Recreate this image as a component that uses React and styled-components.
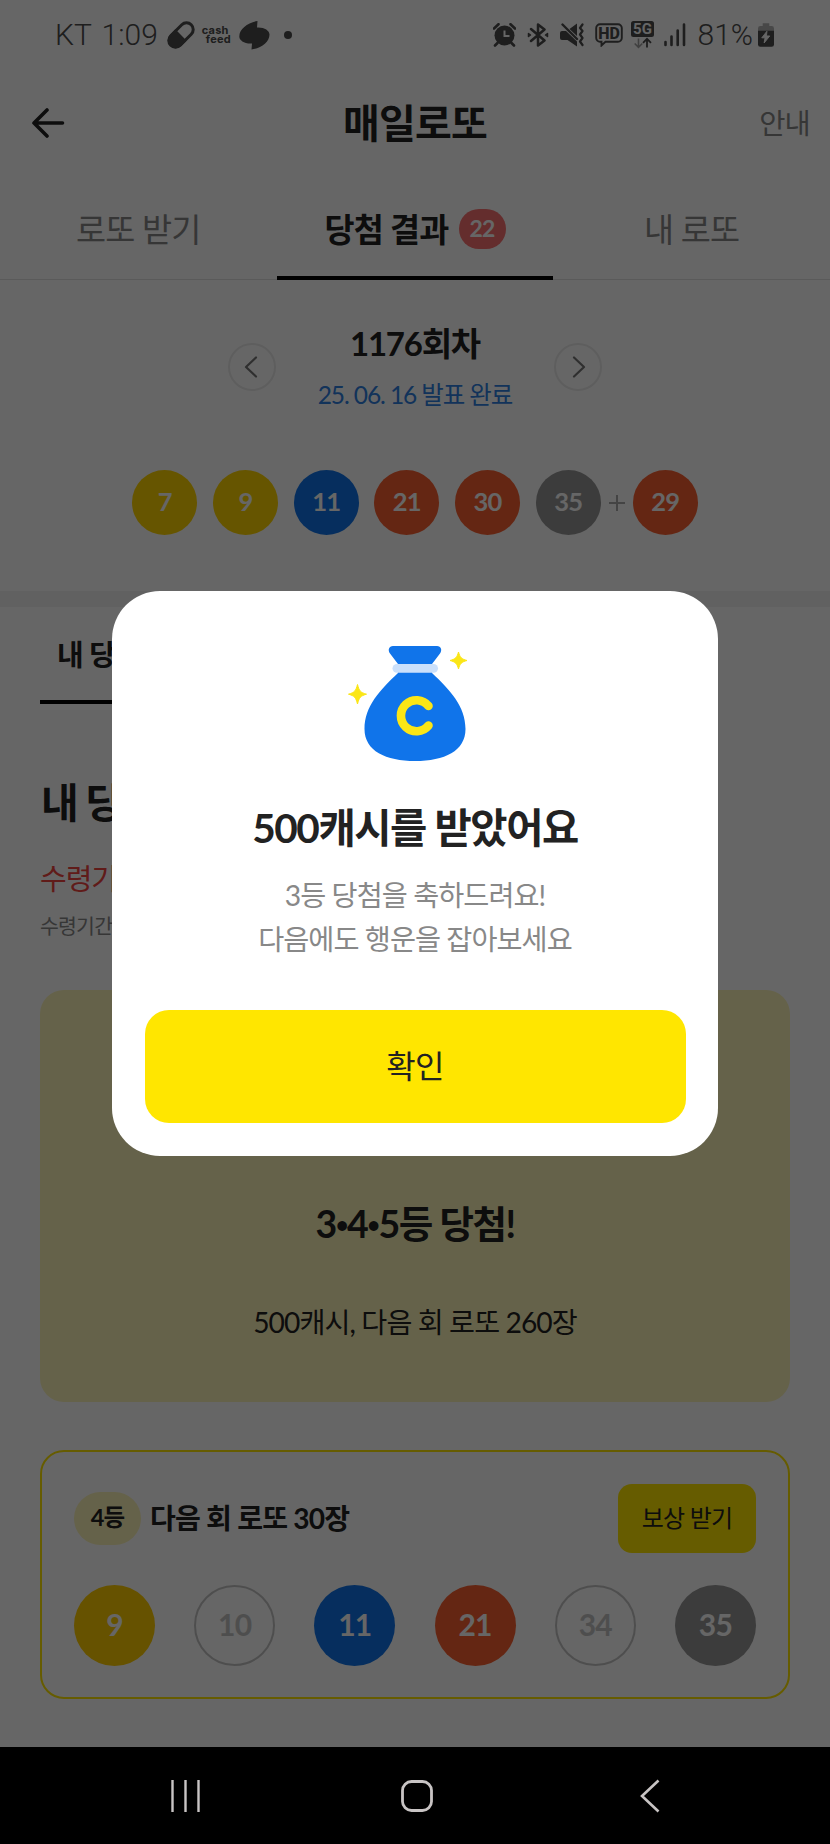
import React from 'react';
import styled, { createGlobalStyle } from 'styled-components';

const GlobalStyle = createGlobalStyle`
  * {
    box-sizing: border-box;
  }

  body {
    margin: 0;
    background: #000;
    font-family: Lato, 'Noto Sans CJK KR', sans-serif;
    letter-spacing: -0.8px;
    color: #222;
  }

  svg {
    display: block;
    flex: none;
  }

  button {
    border: 0;
    padding: 0;
    background: none;
    font: inherit;
    letter-spacing: inherit;
    color: inherit;
  }
`;

const Screen = styled.div`
  width: 830px;
  height: 1844px;
  display: flex;
  flex-direction: column;
  overflow: hidden;
`;

const Page = styled.div`
  position: relative;
  height: 1747px;
  background: #fff;
  display: flex;
  flex-direction: column;
`;

const StatusBar = styled.div`
  height: 70px;
  padding: 0 56px 0 54px;
  display: flex;
  justify-content: space-between;
  align-items: center;
  color: #4b4b4b;
`;

const StatusGroup = styled.div`
  display: flex;
  align-items: center;
  gap: ${props => props.$gap}px;
`;

const StatusText = styled.span`
  font-family: Roboto, sans-serif;
  font-weight: 300;
  font-size: 30px;
  line-height: 34px;
  letter-spacing: 0;
  word-spacing: 3px;
  margin-left: 1px;
  white-space: pre;
`;

const CashFeed = styled.span`
  width: 29px;
  font-family: Inter, sans-serif;
  font-weight: 700;
  font-size: 11px;
  line-height: 9px;
  letter-spacing: 0.2px;

  span {
    display: block;
    padding-left: 4px;
  }
`;

const Header = styled.header`
  height: 106px;
  padding: 0 20px;
  display: grid;
  grid-template-columns: 1fr auto 1fr;
  align-items: center;
`;

const HeaderTitle = styled.h1`
  margin: 0;
  padding-bottom: 1px;
  font-size: 40px;
  line-height: 56px;
  font-weight: 700;
`;

const HeaderLink = styled.span`
  justify-self: end;
  padding-bottom: 4px;
  font-size: 28.5px;
  color: #888;
`;

const Tabs = styled.nav`
  height: 104px;
  display: grid;
  grid-template-columns: repeat(3, 1fr);
  border-bottom: 1px solid #e2e2e2;
`;

const Tab = styled.div`
  height: 104px;
  padding-top: 2px;
  display: flex;
  align-items: center;
  justify-content: center;
  gap: 10px;
  font-size: 32.7px;
  font-weight: ${props => (props.$active ? 700 : 400)};
  color: ${props => (props.$active ? '#222' : '#888')};
  border-bottom: ${props => (props.$active ? '4px solid #000' : '4px solid transparent')};
`;

const Badge = styled.span`
  width: 47px;
  height: 40px;
  margin-top: 3px;
  border-radius: 20px;
  background: #fa7070;
  color: #fff;
  font-size: 23px;
  line-height: 39px;
  text-align: center;
`;

const Round = styled.section`
  height: 311px;
  padding-top: 42px;
`;

const RoundPicker = styled.div`
  height: 90px;
  display: flex;
  align-items: center;
  justify-content: center;
  gap: 41px;
`;

const ArrowButton = styled.button`
  width: 48px;
  height: 48px;
  padding-right: ${props => (props.$right ? 0 : 3)}px;
  padding-left: ${props => (props.$right ? 2 : 0)}px;
  border: 2px solid #ebebeb;
  border-radius: 50%;
  display: flex;
  align-items: center;
  justify-content: center;
`;

const RoundInfo = styled.div`
  width: 196px;
  white-space: nowrap;
  display: flex;
  flex-direction: column;
  align-items: center;
`;

const RoundTitle = styled.h2`
  margin: 0;
  font-size: 33px;
  line-height: 48px;
  letter-spacing: -1.2px;
`;

const RoundDate = styled.div`
  margin-top: 8px;
  font-size: 24.5px;
  line-height: 40px;
  letter-spacing: -1.1px;
  color: #2f80e2;
`;

const BallLine = styled.div`
  margin-top: 58px;
  display: flex;
  justify-content: center;
  align-items: center;
  gap: 15.7px;
`;

const BonusGroup = styled.div`
  display: flex;
  align-items: center;
  gap: 8px;
`;

const BALL_COLORS = {
  yellow: '#ffd400',
  amber: '#ffcc00',
  blue: '#1074ea',
  red: '#fb6030',
  gray: '#969696',
};

const Ball = styled.div`
  width: ${props => props.$size}px;
  height: ${props => props.$size}px;
  padding-bottom: 3px;
  border-radius: 50%;
  display: flex;
  align-items: center;
  justify-content: center;
  font-size: ${props => (props.$size > 70 ? 30 : 25.5)}px;
  font-weight: 700;
  color: ${props => (props.$color ? '#fff' : '#c4c4c4')};
  background: ${props => (props.$color ? BALL_COLORS[props.$color] : 'transparent')};
  border: ${props => (props.$color ? '0' : '2px solid #c4c4c4')};
`;

const Divider = styled.div`
  height: 16px;
  background: #f3f3f3;
`;

const Content = styled.main`
  padding: 0 40px;
  display: flex;
  flex-direction: column;
`;

const SubTab = styled.div`
  width: 200px;
  height: 97px;
  padding: 26px 17px 0;
  font-size: 29px;
  line-height: 44px;
  font-weight: 700;
  border-bottom: 4px solid #000;
`;

const Heading = styled.h3`
  margin: 69px 0 0 1px;
  font-size: 41px;
  line-height: 60px;
  letter-spacing: -1.5px;
`;

const Period = styled.div`
  margin-top: 24px;
  width: 240px;
  font-size: 29px;
  line-height: 44px;
  letter-spacing: -1px;
  color: #f04440;
`;

const PeriodNote = styled.div`
  margin-top: 10px;
  width: 240px;
  font-size: 20.5px;
  line-height: 30px;
  color: #888;
`;

const PrizeCard = styled.section`
  height: 412px;
  margin-top: 49px;
  padding-bottom: 58px;
  border-radius: 24px;
  background: #fdf5b9;
  display: flex;
  flex-direction: column;
  align-items: center;
  justify-content: flex-end;
`;

const PrizeTitle = styled.div`
  font-size: 37.5px;
  line-height: 56px;
  letter-spacing: -1.5px;
  font-weight: 700;
`;

const Bullet = styled.span`
  font-size: 22px;
  line-height: 1;
  vertical-align: 5px;
`;

const PrizeText = styled.div`
  margin-top: 48px;
  font-size: 28.2px;
  line-height: 44px;
  letter-spacing: -0.9px;
`;

const TicketCard = styled.section`
  height: 249px;
  margin-top: 48px;
  padding: 32px 32px 0;
  border: 2px solid #ffe600;
  border-radius: 24px;
`;

const TicketHead = styled.div`
  height: 69px;
  display: flex;
  align-items: center;
`;

const Rank = styled.span`
  width: 67px;
  height: 53px;
  border-radius: 27px;
  background: #fdf5b9;
  font-size: 23.5px;
  line-height: 51px;
  font-weight: 700;
  text-align: center;
`;

const TicketTitle = styled.span`
  margin-left: 9px;
  padding-bottom: 2px;
  flex: 1;
  font-size: 28.1px;
  line-height: 44px;
  font-weight: 700;
`;

const RewardButton = styled.button`
  width: 138px;
  height: 69px;
  padding-bottom: 4px;
  border-radius: 14px;
  background: #ffe600;
  font-size: 24px;
`;

const TicketBalls = styled.div`
  margin-top: 32px;
  display: flex;
  justify-content: space-between;
`;

const Overlay = styled.div`
  position: absolute;
  inset: 0;
  padding: 591px 0 0 112px;
  background: rgba(0, 0, 0, 0.6);
`;

const Dialog = styled.div`
  width: 606px;
  height: 565px;
  padding: 29px 33px 33px;
  border-radius: 48px;
  background: #fff;
  display: flex;
  flex-direction: column;
  align-items: center;
`;

const BagBox = styled.div`
  padding-right: 10px;
`;

const DialogTitle = styled.h2`
  margin: 28px 0 0;
  font-size: 40.5px;
  line-height: 60px;
  letter-spacing: -1.4px;
`;

const DialogText = styled.p`
  margin: 15px 0 0;
  font-size: 28.3px;
  line-height: 44px;
  letter-spacing: -0.95px;
  text-align: center;
  color: #888;
`;

const ConfirmButton = styled.button`
  width: 541px;
  height: 113px;
  margin-top: auto;
  padding-bottom: 5px;
  border-radius: 24px;
  background: #ffe600;
  font-size: 32px;
`;

const SystemNav = styled.div`
  height: 97px;
  padding: 1px 170px 0;
  background: #000;
  display: flex;
  align-items: center;
  justify-content: space-between;
`;

const HomeButton = styled.button`
  padding-right: 9px;
`;

const PillBox = styled.div`
  margin: 0 -1px 0 1px;
`;

const HdBox = styled.div`
  margin-right: -2px;
`;

const PillIcon = () => (
  <svg width="28" height="28" viewBox="0 0 28 28">
    <g transform="rotate(45 14 14)">
      <rect x="7.3" y="-0.5" width="13.4" height="29" rx="6.7" fill="none" stroke="currentColor" strokeWidth="3" />
      <path d="M6 14h16v7.500a8 8 0 0 1-16 0z" fill="currentColor" />
    </g>
  </svg>
);

const BlobIcon = () => (
  <svg width="31" height="29" viewBox="0 0 31 29">
    <path d="M18.500 0 18 6.500C25 6 30.500 9.500 30.500 13.500 30.500 21 22 27.500 12.500 28.500L13 22.500C5.500 23 .3 19.500.3 15.500.3 8 9 1.500 18.500 0z" fill="currentColor" />
  </svg>
);

const DotIcon = () => (
  <svg width="8" height="8" viewBox="0 0 8 8">
    <circle cx="4" cy="4" r="4" fill="currentColor" />
  </svg>
);

const AlarmIcon = () => (
  <svg width="23" height="24" viewBox="0 0 23 24">
    <circle cx="11.500" cy="12.500" r="10" fill="currentColor" />
    <path d="M1 5.500 5.500 1.200M22 5.500 17.500 1.200M4.500 20 2 22.500M18.500 20l2.500 2.500" stroke="currentColor" strokeWidth="2.600" strokeLinecap="round" />
    <path d="M11.500 7.500v5.500h5" stroke="#fff" strokeWidth="2" fill="none" />
  </svg>
);

const BluetoothIcon = () => (
  <svg width="24" height="24" viewBox="-1 0 24 24" fill="none" stroke="currentColor" strokeWidth="2.500" strokeLinecap="round" strokeLinejoin="round">
    <path d="m4 6 13.500 11.500-6.500 5v-21l6.500 5L4 18" />
    <path d="M1.500 10.500 3.500 12l-2 1.500zM20.500 10.500 18.500 12l2 1.500z" strokeWidth="1.500" fill="currentColor" />
  </svg>
);

const MuteIcon = () => (
  <svg width="24" height="24" viewBox="0 0 24 24" fill="none" stroke="currentColor" strokeWidth="2.200" strokeLinecap="round" strokeLinejoin="round">
    <path d="M2 8h4L17 18.500v5L7.500 17H2a2 2 0 0 1-2-2v-5a2 2 0 0 1 2-2zM9.500 6 17 .5V13z" fill="currentColor" stroke="none" />
    <path d="M2.500 1.500 17 16" strokeWidth="2.400" />
    <path d="m22.500 1.500-2.500 3.500 2.500 3-2.500 3.500 2.500 3.500-2.500 3.500 2.500 3.500" />
  </svg>
);

const HdIcon = () => (
  <svg width="28" height="24" viewBox="0 0 28 24">
    <path d="M5 1.200h18A3.800 3.800 0 0 1 26.800 5v10a3.800 3.800 0 0 1-3.800 3.800H10.500L6.500 22.500v-3.700H5A3.800 3.800 0 0 1 1.200 15V5A3.800 3.800 0 0 1 5 1.200z" fill="none" stroke="currentColor" strokeWidth="1.900" />
    <text x="14" y="15.800" textAnchor="middle" fontFamily="Roboto, sans-serif" fontWeight="800" fontSize="16" letterSpacing="0" fill="currentColor">HD</text>
  </svg>
);

const FiveGIcon = () => (
  <svg width="23" height="28" viewBox="0 0 23 28">
    <rect width="23" height="16" rx="2.500" fill="currentColor" />
    <text x="11.500" y="13.300" textAnchor="middle" fontFamily="Roboto, sans-serif" fontWeight="700" fontSize="15" letterSpacing="0" fill="#fff">5G</text>
    <path d="M7.500 17.500v8.500M3.700 22.500l3.800 3.800 3.800-3.800" fill="none" stroke="#a0a0a0" strokeWidth="1.600" />
    <path d="M16 26.500V18M12 21.800 16 17.800l4 4" fill="none" stroke="currentColor" strokeWidth="1.800" />
  </svg>
);

const SignalIcon = () => (
  <svg width="22" height="24" viewBox="0 0 22 24" stroke="currentColor" strokeWidth="2.600" strokeLinecap="round">
    <path d="M1.500 19v3M7.500 13.500V22M13.700 7.500V22M20 1.500V22" />
  </svg>
);

const BatteryIcon = () => (
  <svg width="16" height="24" viewBox="0 0 17 25">
    <path d="M5 0h7v3h2.500A2.500 2.500 0 0 1 17 5.500V9H0V5.500A2.500 2.500 0 0 1 2.500 3H5z" fill="#b4b4b4" />
    <path d="M0 8h17v14.500a2.500 2.500 0 0 1-2.500 2.500h-12A2.500 2.500 0 0 1 0 22.500z" fill="currentColor" />
    <path d="M9.500 8.500 4 15.500h3.500L6.500 21l6-7.500H9z" fill="#fff" stroke="#fff" />
  </svg>
);

const BackIcon = () => (
  <svg width="45" height="30" viewBox="-11 0 45 30" fill="none" stroke="#222" strokeWidth="3.600" strokeLinecap="round" strokeLinejoin="round">
    <path d="M16 2 3 15l13 13M3 15h28.500" />
  </svg>
);

const Chevron = ({ right }) => (
  <svg width="14" height="22" viewBox="0 0 14 22" fill="none" stroke="#777" strokeWidth="2.200" strokeLinecap="round" strokeLinejoin="round">
    <path d={right ? 'M2 1.500 12 11 2 20.500' : 'M12 1.500 2 11l10 9.500'} />
  </svg>
);

const PlusIcon = () => (
  <svg width="16" height="16" viewBox="0 0 16 16" stroke="#aaa" strokeWidth="2">
    <path d="M0 8h16M8 0v16" />
  </svg>
);

const MoneyBag = () => (
  <svg width="160" height="150" viewBox="0 0 160 150">
    <path d="M63 26h44c4 0 5.500 4 3 7.500L102 44v9c18 17 33.500 33 33.500 56 0 22-21 32-50.300 32S34.500 131 34.500 109c0-23 15.500-39 33.500-56v-9l-8-10.500C57.500 30 59 26 63 26z" fill="#1074ea" />
    <rect x="62.500" y="44" width="45.500" height="8.700" rx="4.350" fill="#cbe0fb" />
    <path d="M98.500 86a15.500 15.500 0 1 0 0 19.500" fill="none" stroke="#fbe616" strokeWidth="8.600" strokeLinecap="round" />
    <path d="M128.500 32c1.500 5.500 3 7 8.500 8.500-5.500 1.500-7 3-8.500 8.500-1.500-5.500-3-7-8.500-8.500 5.500-1.500 7-3 8.500-8.500z" fill="#fbe616" stroke="#fbe616" />
    <path d="M27.500 64.500c1.700 6.500 3 8 9 9.700-6 1.700-7.300 3.200-9 9.800-1.700-6.600-3-8.100-9-9.800 6-1.700 7.300-3.200 9-9.700z" fill="#fbe616" stroke="#fbe616" />
  </svg>
);

const RecentsIcon = () => (
  <svg width="32" height="34" viewBox="0 0 32 34" stroke="#c8c4c4" strokeWidth="2.400">
    <path d="M2.500 1v32M15.500 1v32M28.500 1v32" />
  </svg>
);

const HomeIcon = () => (
  <svg width="34" height="34" viewBox="0 0 34 34">
    <rect x="2.500" y="2.500" width="29" height="29" rx="9" fill="none" stroke="#c8c4c4" strokeWidth="2.800" />
  </svg>
);

const NavBackIcon = () => (
  <svg width="20" height="34" viewBox="0 0 20 34" fill="none" stroke="#c8c4c4" strokeWidth="2.600">
    <path d="M18.500 1.500 2 17l16.500 15.500" />
  </svg>
);

const winning = [
  { n: 7, color: 'yellow' },
  { n: 9, color: 'yellow' },
  { n: 11, color: 'blue' },
  { n: 21, color: 'red' },
  { n: 30, color: 'red' },
];

const ticket = [
  { n: 9, color: 'amber' },
  { n: 10 },
  { n: 11, color: 'blue' },
  { n: 21, color: 'red' },
  { n: 34 },
  { n: 35, color: 'gray' },
];

const App = () => {
  return (
    <Screen>
      <GlobalStyle />
      <Page>
        <StatusBar>
          <StatusGroup $gap={8}>
            <StatusText>KT 1:09</StatusText>
            <PillBox><PillIcon /></PillBox>
            <CashFeed>cash<span>feed</span></CashFeed>
            <BlobIcon />
            <StatusGroup $gap={0}>&nbsp;&nbsp;<DotIcon /></StatusGroup>
          </StatusGroup>
          <StatusGroup $gap={10.3}>
            <AlarmIcon />
            <BluetoothIcon />
            <MuteIcon />
            <HdBox><HdIcon /></HdBox>
            <FiveGIcon />
            <SignalIcon />
            <StatusGroup $gap={5}>
              <StatusText>81%</StatusText>
              <BatteryIcon />
            </StatusGroup>
          </StatusGroup>
        </StatusBar>

        <Header>
          <BackIcon />
          <HeaderTitle>매일로또</HeaderTitle>
          <HeaderLink>안내</HeaderLink>
        </Header>

        <Tabs>
          <Tab>로또 받기</Tab>
          <Tab $active>당첨 결과<Badge>22</Badge></Tab>
          <Tab>내 로또</Tab>
        </Tabs>

        <Round>
          <RoundPicker>
            <ArrowButton><Chevron /></ArrowButton>
            <RoundInfo>
              <RoundTitle>1176회차</RoundTitle>
              <RoundDate>25. 06. 16 발표 완료</RoundDate>
            </RoundInfo>
            <ArrowButton $right><Chevron right /></ArrowButton>
          </RoundPicker>
          <BallLine>
            {winning.map(el => (
              <Ball key={el.n} $size={65} $color={el.color}>{el.n}</Ball>
            ))}
            <BonusGroup>
              <Ball $size={65} $color="gray">35</Ball>
              <PlusIcon />
              <Ball $size={65} $color="red">29</Ball>
            </BonusGroup>
          </BallLine>
        </Round>

        <Divider />

        <Content>
          <SubTab>내 당첨결과</SubTab>
          <Heading>내 당첨결과</Heading>
          <Period>수령기간</Period>
          <PeriodNote>수령기간</PeriodNote>
          <PrizeCard>
            <PrizeTitle>3<Bullet>•</Bullet>4<Bullet>•</Bullet>5등 당첨!</PrizeTitle>
            <PrizeText>500캐시, 다음 회 로또 260장</PrizeText>
          </PrizeCard>
          <TicketCard>
            <TicketHead>
              <Rank>4등</Rank>
              <TicketTitle>다음 회 로또 30장</TicketTitle>
              <RewardButton>보상 받기</RewardButton>
            </TicketHead>
            <TicketBalls>
              {ticket.map(el => (
                <Ball key={el.n} $size={81} $color={el.color}>{el.n}</Ball>
              ))}
            </TicketBalls>
          </TicketCard>
        </Content>

        <Overlay>
          <Dialog>
            <BagBox><MoneyBag /></BagBox>
            <DialogTitle>500캐시를 받았어요</DialogTitle>
            <DialogText>
              3등 당첨을 축하드려요!<br />
              다음에도 행운을 잡아보세요
            </DialogText>
            <ConfirmButton>확인</ConfirmButton>
          </Dialog>
        </Overlay>
      </Page>
      <SystemNav>
        <RecentsIcon />
        <HomeButton><HomeIcon /></HomeButton>
        <NavBackIcon />
      </SystemNav>
    </Screen>
  );
};

export default App;
